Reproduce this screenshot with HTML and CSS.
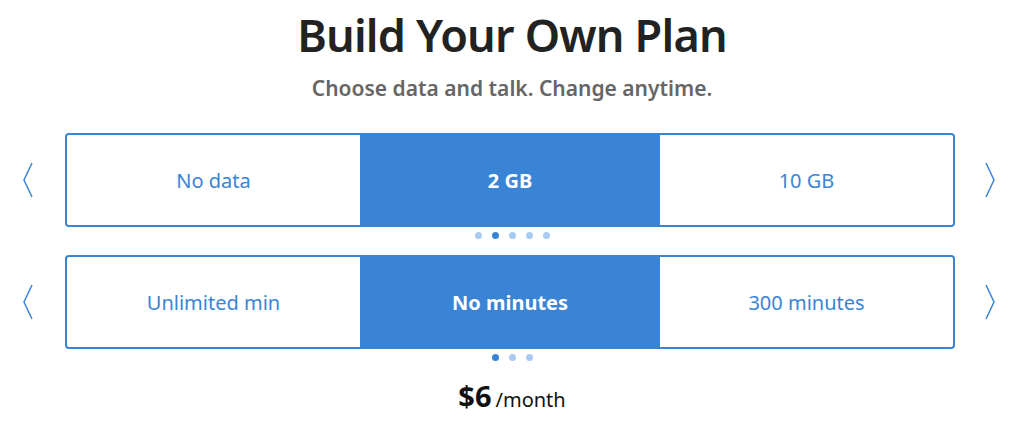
FILE: index.html
```html
<!DOCTYPE html>
<html>
<head>
<meta charset="utf-8">
<link rel="stylesheet" href="styles.css">
</head>
<body>
<main class="page">
  <h1 class="title">Build Your Own Plan</h1>
  <p class="subtitle">Choose data and talk. Change anytime.</p>

  <section class="picker">
    <div class="carousel">
      <button class="arrow arrow-left" aria-label="Previous">
        <svg width="12" height="36" viewBox="0 0 12 36"><polyline points="10,1 2,18 10,35" fill="none" stroke="#3a84d6" stroke-width="1.5"/></svg>
      </button>
      <div class="track">
        <div class="cell">No data</div>
        <div class="cell active">2 GB</div>
        <div class="cell">10 GB</div>
      </div>
      <button class="arrow arrow-right" aria-label="Next">
        <svg width="12" height="36" viewBox="0 0 12 36"><polyline points="2,1 10,18 2,35" fill="none" stroke="#3a84d6" stroke-width="1.5"/></svg>
      </button>
    </div>
    <div class="dots">
      <span class="dot"></span><span class="dot on"></span><span class="dot"></span><span class="dot"></span><span class="dot"></span>
    </div>
  </section>

  <section class="picker">
    <div class="carousel">
      <button class="arrow arrow-left" aria-label="Previous">
        <svg width="12" height="36" viewBox="0 0 12 36"><polyline points="10,1 2,18 10,35" fill="none" stroke="#3a84d6" stroke-width="1.5"/></svg>
      </button>
      <div class="track">
        <div class="cell">Unlimited min</div>
        <div class="cell active">No minutes</div>
        <div class="cell">300 minutes</div>
      </div>
      <button class="arrow arrow-right" aria-label="Next">
        <svg width="12" height="36" viewBox="0 0 12 36"><polyline points="2,1 10,18 2,35" fill="none" stroke="#3a84d6" stroke-width="1.5"/></svg>
      </button>
    </div>
    <div class="dots">
      <span class="dot on"></span><span class="dot"></span><span class="dot"></span>
    </div>
  </section>

  <p class="price"><span class="amount">$6</span><span class="per">/month</span></p>
</main>
</body>
</html>
```

FILE: styles.css
```css
* { box-sizing: border-box; }
html, body { margin: 0; padding: 0; background: #fff; }
body { font-family: "Noto Sans", "Open Sans", sans-serif; }

.page {
  width: 1024px;
  height: 432px;
  overflow: hidden;
  display: flex;
  flex-direction: column;
  align-items: stretch;
}

.title {
  margin: 6px 0 0;
  text-align: center;
  font-size: 45px;
  line-height: 58px;
  font-weight: 600;
  color: #222;
  letter-spacing: -0.8px;
}

.subtitle {
  margin: 10px 0 0;
  text-align: center;
  font-size: 21px;
  line-height: 28px;
  font-weight: 600;
  color: #666;
}

.picker:first-of-type { margin-top: 31px; }

.carousel {
  display: flex;
  align-items: center;
}

.arrow {
  width: 65px;
  height: 94px;
  padding: 0 10px 0 0;
  border: 0;
  background: none;
  display: flex;
  align-items: center;
  justify-content: center;
}
.arrow-right { width: 69px; padding: 0; }

.track {
  width: 890px;
  height: 94px;
  border: 2px solid #3a84d6;
  border-radius: 4px;
  display: grid;
  grid-template-columns: 1fr 300px 1fr;
  overflow: hidden;
}

.cell {
  display: flex;
  align-items: center;
  justify-content: center;
  font-size: 20px;
  color: #3a84d6;
}
.cell.active {
  background: #3a84d6;
  color: #fff;
  font-weight: 700;
}

.dots {
  height: 28px;
  display: flex;
  justify-content: center;
  align-items: flex-start;
  gap: 10px;
  padding-top: 5px;
}
.dot {
  width: 7px;
  height: 7px;
  border-radius: 50%;
  background: #a9c9f0;
}
.dot.on { background: #3a84d6; }

.price {
  margin: -1px 0 0;
  text-align: center;
  color: #111;
}
.amount { font-size: 29px; font-weight: 700; }
.per { font-size: 20px; margin-left: 4px; }
```
